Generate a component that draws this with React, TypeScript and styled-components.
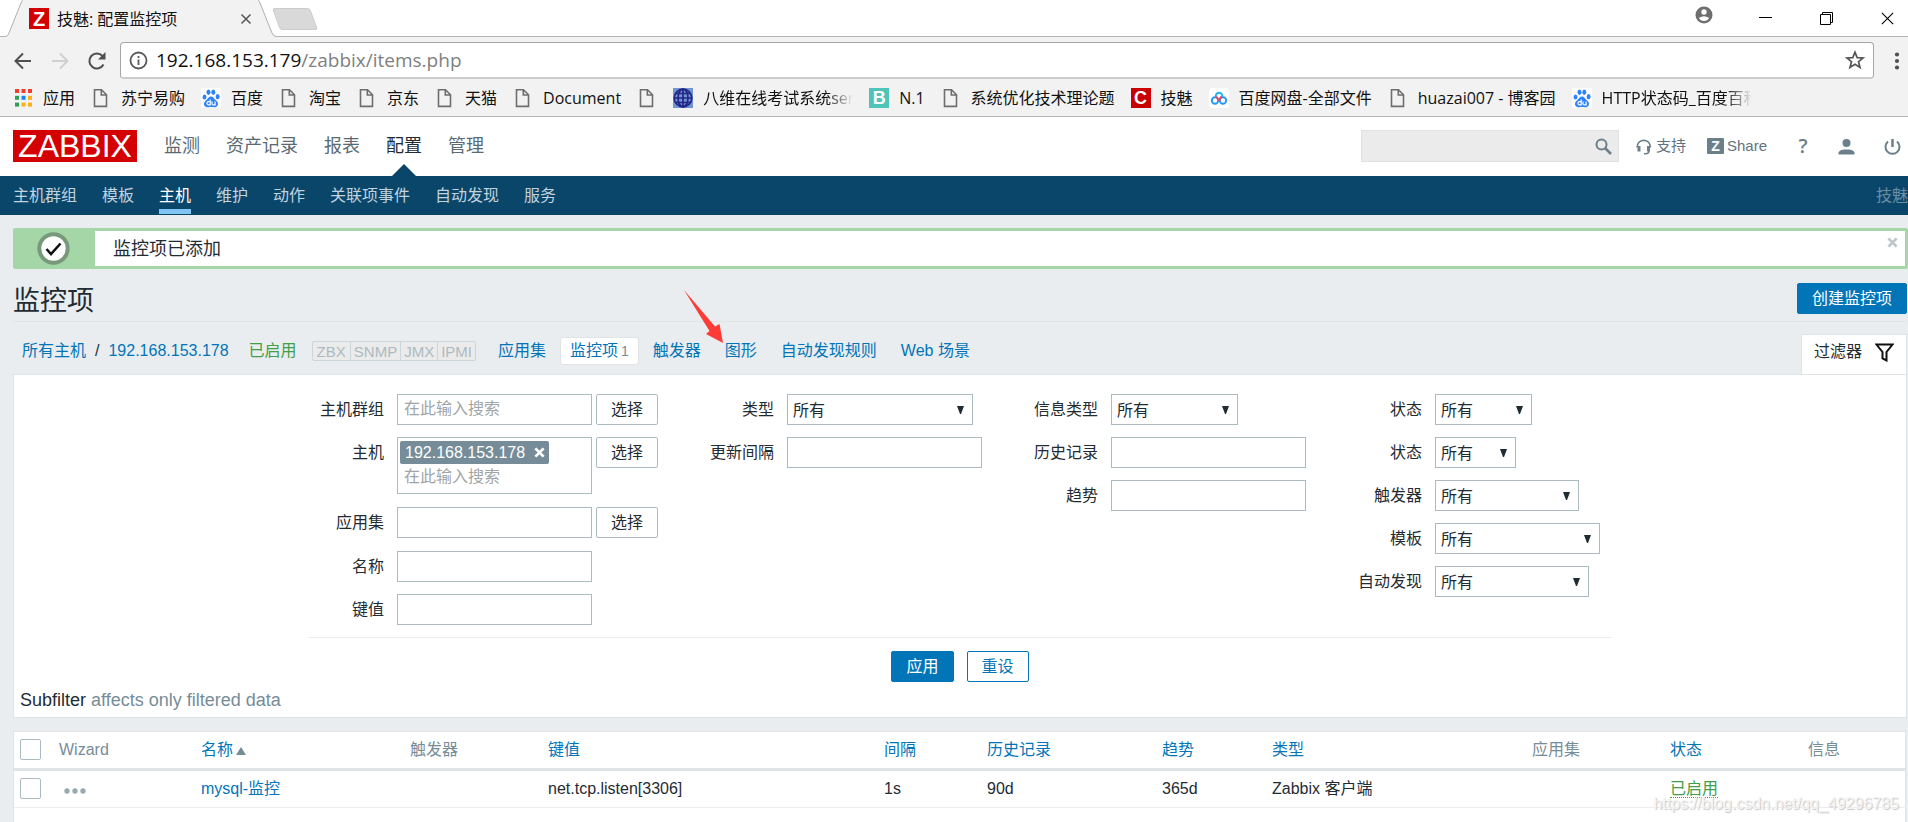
import React from "react";
import styled, { createGlobalStyle, css } from "styled-components";

const uiFont = `"Open Sans", "Noto Sans CJK SC", sans-serif`;
const pageFont = `"Liberation Sans", "Noto Sans CJK SC", sans-serif`;
const blue = "#0275b8";
const slate = "#768d99";
const line = "#dfe4e7";
const fieldLine = "#acbbc2";
const green = "#429e47";

const GlobalStyle = createGlobalStyle`
  *, *::before, *::after { box-sizing: border-box; }
  body { margin: 0; background: #e9edf0; color: #1f2c33; font: 16px/20px ${pageFont}; }
  button, input, select { font: inherit; color: inherit; margin: 0; }
  a { color: inherit; text-decoration: none; }
  svg { display: block; flex: none; }
`;

const Window = styled.div`
  display: flex;
  flex-direction: column;
  min-height: 100vh;
  overflow: hidden;
  position: relative;
`;

/* ---------- browser chrome ---------- */

const TabStrip = styled.div`
  display: flex;
  height: 37px;
  padding-left: 6px;
  background: #fff;
  border-bottom: 1px solid #b5b5b5;
  font-family: ${uiFont};
`;

const Tab = styled.div`
  position: relative;
  display: flex;
  align-items: center;
  width: 270px;
  height: 37px;
  margin-bottom: -1px;
  padding: 0 20px 0 23px;
  color: #111;
`;

const TabShape = styled.svg`
  position: absolute;
  left: 0;
  top: 0;
`;

const TabIcon = styled.span`
  position: relative;
  display: grid;
  place-items: center;
  width: 20px;
  height: 21px;
  margin-right: 8px;
  background: #d40000;
  color: #fff;
  font: bold 20px/20px ${pageFont};
`;

const TabTitle = styled.span`
  position: relative;
  flex: 1;
`;

const IconButton = styled.button<{ $w?: number }>`
  position: relative;
  display: grid;
  place-items: center;
  flex: none;
  width: ${(p) => p.$w ?? 20}px;
  height: 24px;
  padding: 0;
  border: 0;
  background: none;
  cursor: pointer;
`;

const NewTab = styled.button`
  width: 38px;
  height: 22px;
  margin: 8px 0 0 0;
  padding: 0;
  border: 1px solid #ccc;
  border-radius: 3px;
  background: #d9d9d9;
  transform: skewX(20deg);
`;

const WindowButtons = styled.div`
  display: flex;
  align-items: center;
  gap: 41px;
  margin-left: auto;
  padding-right: 11px;
`;

const Toolbar = styled.div`
  display: flex;
  align-items: center;
  height: 43px;
  padding: 4px 2px 0 13px;
  background: #f2f2f2;
`;

const NavButtons = styled.div`
  display: flex;
  gap: 17px;
  margin-right: 13px;
`;

const Omnibox = styled.div`
  display: flex;
  align-items: center;
  flex: 1;
  height: 37px;
  margin-right: 14px;
  padding: 0 8px;
  border: 1px solid #a6a6a6;
  border-bottom: 2px solid #ccc;
  border-radius: 4px;
  background: #fff;
`;

const Address = styled.div`
  flex: 1;
  margin-left: 8px;
  color: #808080;
  font: 19px/28px ${uiFont};
  b { color: #111; font-weight: 400; }
`;

const Bookmarks = styled.nav`
  display: flex;
  align-items: center;
  gap: 16px;
  height: 37px;
  padding-left: 13px;
  background: #f2f2f2;
  border-bottom: 1px solid #b6b6b6;
  font: 16px/22px ${uiFont};
  color: #111;
`;

const Bookmark = styled.a`
  display: flex;
  align-items: center;
  gap: 10px;
  flex: none;
`;

const BookmarkText = styled.span<{ $fade?: boolean }>`
  white-space: nowrap;
  ${(p) =>
    p.$fade &&
    css`
      width: 150px;
      overflow: hidden;
      mask-image: linear-gradient(to right, #000 124px, transparent 150px);
    `}
`;

const IconBox = styled.span<{ $bg?: string; $fg?: string }>`
  display: grid;
  place-items: center;
  width: 20px;
  height: 20px;
  background: ${(p) => p.$bg ?? "none"};
  color: ${(p) => p.$fg ?? "#fff"};
  font: bold 18px/20px ${pageFont};
`;

/* ---------- zabbix header ---------- */

const Header = styled.header`
  display: flex;
  align-items: center;
  height: 59px;
  padding: 0 7px 1px 13px;
  background: #fff;
`;

const Logo = styled.a`
  width: 124px;
  height: 32px;
  background: #d40000;
  color: #fff;
  font: 32px/32px "Liberation Sans", sans-serif;
  text-align: center;
`;

const MainNav = styled.nav`
  display: flex;
  gap: 26px;
  height: 58px;
  margin-left: 27px;
  font-size: 18px;
  line-height: 58px;
`;

const MainLink = styled.a<{ $active?: boolean }>`
  position: relative;
  color: ${(p) => (p.$active ? "#1f2c33" : "#5a6a73")};
  ${(p) =>
    p.$active &&
    css`
      &::after {
        content: "";
        position: absolute;
        left: 6px;
        bottom: -1px;
        border: 12px solid transparent;
        border-top: 0;
        border-bottom-color: #0a466a;
      }
    `}
`;

const SearchBox = styled.label`
  display: flex;
  align-items: center;
  width: 258px;
  height: 32px;
  margin-left: auto;
  padding-right: 6px;
  border: 1px solid #dfe1e2;
  background: #ebebeb;
  input {
    flex: 1;
    min-width: 0;
    height: 28px;
    border: 0;
    padding: 0 8px;
    background: none;
    outline: 0;
  }
`;

const HeaderTools = styled.div`
  display: flex;
  align-items: center;
  margin-left: 17px;
  color: #5f747f;
  font-size: 15px;
`;

const ToolLink = styled.a<{ $gap: number }>`
  display: flex;
  align-items: center;
  gap: 3px;
  margin-right: ${(p) => p.$gap}px;
`;

const ShareBadge = styled.span`
  width: 17px;
  height: 16px;
  border-radius: 1px;
  background: #6c808b;
  color: #fff;
  font: bold 14px/16px ${pageFont};
  text-align: center;
`;

const HelpMark = styled.span`
  width: 12px;
  color: #6c808b;
  font: 600 20px/20px ${uiFont};
  text-align: center;
`;

const SubNav = styled.nav`
  display: flex;
  gap: 25px;
  height: 39px;
  padding-left: 13px;
  background: #0a466a;
  color: #c0d3df;
  line-height: 40px;
`;

const SubLink = styled.a<{ $active?: boolean }>`
  height: 38px;
  border-bottom: 5px solid ${(p) => (p.$active ? "#7fc4f3" : "transparent")};
  color: ${(p) => (p.$active ? "#fff" : "inherit")};
  white-space: nowrap;
`;

const ServerName = styled.span`
  margin-left: auto;
  color: #6b8ea3;
`;

/* ---------- page body ---------- */

const Page = styled.main`
  display: flex;
  flex-direction: column;
  flex: 1;
  padding: 13px 0 0 13px;
`;

const Message = styled.div`
  display: flex;
  align-items: center;
  height: 41px;
  border: 3px solid #a5d6a7;
  border-radius: 2px;
  background: #fff;
  font-size: 18px;
`;

const MessageIcon = styled.div`
  display: flex;
  align-items: center;
  width: 79px;
  height: 35px;
  margin-right: 18px;
  padding-left: 21px;
  background: #a5d6a7;
`;

const MessageClose = styled(IconButton)`
  align-self: flex-start;
  margin: -1px 3px 0 auto;
`;

const TitleRow = styled.div`
  display: flex;
  align-items: flex-start;
  justify-content: space-between;
  height: 53px;
  margin-right: 1px;
  padding-top: 14px;
  border-bottom: 1px solid ${line};
`;

const Title = styled.h1`
  margin: 0;
  font-size: 27px;
  line-height: 36px;
  font-weight: 400;
`;

const Button = styled.button<{ $kind?: "primary" | "outline" | "plain" }>`
  flex: none;
  height: 31px;
  padding: 0 14px;
  border: 1px solid ${(p) => (p.$kind === "plain" ? fieldLine : blue)};
  border-radius: 2px;
  background: ${(p) => (p.$kind === "primary" ? blue : "#fff")};
  color: ${(p) => (p.$kind === "primary" ? "#fff" : p.$kind === "outline" ? blue : "#1f2c33")};
  line-height: 28px;
  cursor: pointer;
`;

const Crumbs = styled.div`
  display: flex;
  align-items: center;
  height: 52px;
  margin-right: 1px;
  padding: 6px 0 0 9px;
  color: ${blue};
  white-space: nowrap;
`;

const HostPath = styled.div`
  display: flex;
  gap: 9px;
  i { color: #1f2c33; font-style: normal; }
`;

const Enabled = styled.a<{ $dotted?: boolean }>`
  color: ${green};
  ${(p) => p.$dotted && `border-bottom: 1px dotted ${green};`}
`;

const HostStatus = styled(Enabled)`
  margin: 0 15px 0 20px;
`;

const Interfaces = styled.div`
  display: flex;
  height: 20px;
  margin-right: 10px;
  border: 1px solid #ccd5d9;
  border-radius: 2px;
  background: #ebebeb;
  color: #adbac1;
  font-size: 15px;
  line-height: 20px;
  span { padding: 0 4px; }
  span + span { border-left: 1px solid #ccd5d9; padding: 0 3px; }
`;

const CrumbTab = styled.a<{ $active?: boolean }>`
  height: 28px;
  padding: 0 ${(p) => (p.$active ? 9 : 12)}px;
  border: ${(p) => (p.$active ? `1px solid ${line}` : 0)};
  border-radius: 3px;
  background: ${(p) => (p.$active ? "#fff" : "none")};
  line-height: ${(p) => (p.$active ? 26 : 28)}px;
  margin: 0 ${(p) => (p.$active ? 2 : 0)}px;
  small { margin-left: 3px; color: ${slate}; font-size: 14px; }
`;

const FilterTab = styled.button`
  display: flex;
  align-items: center;
  gap: 13px;
  align-self: flex-end;
  height: 41px;
  margin: 0 0 -1px auto;
  padding: 0 12px 6px;
  border: 1px solid ${line};
  border-bottom: 0;
  border-radius: 2px 2px 0 0;
  background: #fff;
  color: #1f2c33;
`;

const FilterPanel = styled.form`
  display: flex;
  flex-direction: column;
  margin-right: 1px;
  padding: 19px 0 6px;
  border: 1px solid ${line};
  background: #fff;
`;

const FilterGrid = styled.div`
  display: flex;
  gap: 52px;
  align-self: center;
  padding: 0 12px 12px;
  border-bottom: 1px solid #ebeef0;
`;

const FilterColumn = styled.div`
  display: flex;
  flex-direction: column;
  gap: 12px;
`;

const Field = styled.div<{ $tall?: boolean }>`
  display: flex;
  align-items: ${(p) => (p.$tall ? "center" : "flex-start")};
  gap: 4px;
  min-height: ${(p) => (p.$tall ? 33 : 31)}px;
`;

const Label = styled.label`
  width: 64px;
  margin-right: 9px;
  text-align: right;
  line-height: 31px;
  white-space: nowrap;
`;

const TextInput = styled.input`
  width: 195px;
  height: 31px;
  padding: 0 6px 1px;
  border: 1px solid ${fieldLine};
  background: #fff;
  &::placeholder { color: #a0a5a8; opacity: 1; }
`;

const TagInput = styled.div`
  display: flex;
  flex-direction: column;
  align-items: flex-start;
  width: 195px;
  height: 57px;
  padding: 3px 2px;
  border: 1px solid ${fieldLine};
  input {
    width: 100%;
    height: 27px;
    padding: 0 4px;
    border: 0;
    background: none;
    &::placeholder { color: #a0a5a8; opacity: 1; }
  }
`;

const Tag = styled.span`
  display: flex;
  align-items: center;
  gap: 4px;
  height: 23px;
  padding: 0 0 0 5px;
  border-radius: 2px;
  background: ${slate};
  color: #fff;
`;

const SelectBox = styled.span<{ $w: number }>`
  position: relative;
  width: ${(p) => p.$w}px;
  select {
    display: block;
    width: 100%;
    height: 31px;
    padding: 3px 5px 0;
    border: 1px solid ${fieldLine};
    border-radius: 0;
    background: #fff;
    appearance: none;
  }
  svg { position: absolute; right: 9px; top: 12px; pointer-events: none; }
`;

const FilterButtons = styled.div`
  display: flex;
  justify-content: center;
  gap: 13px;
  margin: 13px 0 7px;
`;

const Subfilter = styled.div`
  padding-left: 6px;
  font-size: 18px;
  line-height: 22px;
  span { color: ${slate}; }
`;

const TableCard = styled.section`
  flex: 1;
  margin: 13px 2px 0 0;
  border: 1px solid ${line};
  border-bottom: 0;
  background: #fff;
`;

const Table = styled.table`
  width: 100%;
  table-layout: fixed;
  border-collapse: collapse;
  th, td { padding: 0 6px; text-align: left; font-weight: 400; white-space: nowrap; }
  th { height: 37px; border-bottom: 3px solid ${line}; color: ${slate}; }
  td { height: 38px; border-bottom: 1px solid #ebeef0; }
  th a, td a.item { color: ${blue}; }
  input {
    display: block;
    width: 21px;
    height: 21px;
    appearance: none;
    border: 1px solid ${fieldLine};
    border-radius: 2px;
    background: #fff;
  }
`;

const SortArrow = styled.svg`
  display: inline-block;
  margin-left: 3px;
`;

const PointerArrow = styled.svg`
  position: absolute;
  left: 684px;
  top: 289px;
`;

const Watermark = styled.div`
  position: absolute;
  right: 9px;
  bottom: 8px;
  color: #f4f4f4;
  text-shadow: 1px 1px 1px #c4c4c4;
`;

/* ---------- icons ---------- */

const FileIcon = () => (
  <svg width="20" height="20" viewBox="0 0 20 20" fill="none" stroke="#6e6e6e" strokeWidth="1.6">
    <path d="M3.500 1.800h7l5 5v11.600h-12zM10.300 2v5h5.200" />
  </svg>
);

const PawIcon = () => (
  <svg width="20" height="20" viewBox="0 0 20 20">
    <path fill="#fff" d="M0 0h20v20H0z" />
    <g fill="#2e83fb">
      <ellipse cx="3.500" cy="9" rx="2" ry="2.600" />
      <ellipse cx="7.500" cy="4.200" rx="2" ry="2.700" />
      <ellipse cx="12.300" cy="4.200" rx="2" ry="2.700" />
      <ellipse cx="16.600" cy="8.700" rx="2" ry="2.600" />
      <path d="M10 8.500c2.200 0 3 2 4.800 3.700 2.200 2 2.500 3.200 2 4.800-.6 2-2.600 2.400-4.300 2.200-1.700-.2-3.300-.2-5 0-1.700.2-3.700-.2-4.300-2.200-.5-1.600-.2-2.800 2-4.800C7 10.500 7.800 8.500 10 8.500z" />
    </g>
    <g fill="none" stroke="#fff" strokeWidth="1.200">
      <path d="M9.200 11.500v5.300H7.500a1.500 1.500 0 010-3.200h1.700M11 13.500v2.200q0 1.100 1.100 1.100h2v-3.300" />
    </g>
  </svg>
);

const AppsIcon = () => (
  <svg width="20" height="20" viewBox="0 0 20 20">
    {["#f33d2f", "#f33d2f", "#f33d2f", "#2f9e59", "#1a82f7", "#fcaf17", "#2f9e59", "#fcaf17", "#fcaf17"].map((c, i) => (
      <rect key={i} x={2 + (i % 3) * 6.500} y={1 + Math.floor(i / 3) * 6.800} width="4" height="4" fill={c} />
    ))}
  </svg>
);

const GlobeIcon = () => (
  <svg width="20" height="20" viewBox="0 0 20 20" fill="none" stroke="#242489" strokeWidth="1.700">
    <path fill="#6f97cf" stroke="none" d="M0 0h20v20H0z" />
    <circle cx="10" cy="10" r="8.800" />
    <ellipse cx="10" cy="10" rx="5" ry="8.800" />
    <path d="M10 1v18M1 10h18M3 5.500h14M3 14.500h14" />
  </svg>
);

const PanIcon = () => (
  <svg width="20" height="20" viewBox="0 0 20 20" fill="none" strokeWidth="1.900">
    <rect width="20" height="20" rx="3" fill="#fff" />
    <circle cx="6" cy="12.500" r="3.200" stroke="#1f9bf5" />
    <circle cx="14" cy="12.500" r="3.200" stroke="#1f9bf5" />
    <path d="M7 9a3.200 3.200 0 116 0" stroke="#12b2f5" />
    <path d="M7.200 8.500q1 1.500 4 5M12.800 8.500L10 11.500" stroke="#ee4660" />
  </svg>
);

const HeadsetIcon = () => (
  <svg width="17" height="17" viewBox="0 0 17 17" fill="none" stroke="#6c808b" strokeWidth="1.700">
    <path d="M1.300 9.500V8a6.500 6.500 0 0112.900 0v1.500" />
    <path d="M3 8v5.500M12.500 8v5.500" strokeWidth="3" />
    <path d="M13 13q0 2.700-3.500 2.700H8" strokeWidth="1.500" />
  </svg>
);

const Cross = ({ size, color, width = 2 }: { size: number; color: string; width?: number }) => (
  <svg width={size} height={size} viewBox="0 0 12 12" stroke={color} strokeWidth={width}>
    <path d="M1.500 1.500l9 9M10.500 1.500l-9 9" />
  </svg>
);

/* ---------- data ---------- */

const letterIcon = (text: string, bg: string) => <IconBox $bg={bg}>{text}</IconBox>;

const bookmarks: { text?: string; icon: React.ReactNode; fade?: boolean }[] = [
  { text: "应用", icon: <AppsIcon /> },
  { text: "苏宁易购", icon: <FileIcon /> },
  { text: "百度", icon: <PawIcon /> },
  { text: "淘宝", icon: <FileIcon /> },
  { text: "京东", icon: <FileIcon /> },
  { text: "天猫", icon: <FileIcon /> },
  { text: "Document", icon: <FileIcon /> },
  { icon: <FileIcon /> },
  { text: "八维在线考试系统ser", icon: <GlobeIcon />, fade: true },
  { text: "N.1", icon: letterIcon("B", "#4fc4b8") },
  { text: "系统优化技术理论题", icon: <FileIcon /> },
  { text: "技魅", icon: letterIcon("C", "#c80000") },
  { text: "百度网盘-全部文件", icon: <PanIcon /> },
  { text: "huazai007 - 博客园", icon: <FileIcon /> },
  { text: "HTTP状态码_百度百科", icon: <PawIcon />, fade: true },
];

const mainLinks = ["监测", "资产记录", "报表", "配置", "管理"];
const subLinks = ["主机群组", "模板", "主机", "维护", "动作", "关联项事件", "自动发现", "服务"];
const columnWidths = [39, 142, 209, 138, 336, 103, 175, 110, 260, 138, 138, 104];

const Select = ({ id, label, width }: { id: string; label: string; width: number }) => (
  <Field>
    <Label htmlFor={id}>{label}</Label>
    <SelectBox $w={width}>
      <select id={id}>
        <option>所有</option>
      </select>
      <svg width="7" height="8" viewBox="0 0 7 8">
        <path d="M0 0h7L4 8H3z" fill="#1f2c33" />
      </svg>
    </SelectBox>
  </Field>
);

type TextProps = { id: string; label: string; placeholder?: string; pick?: boolean; tall?: boolean };

const Text = ({ id, label, placeholder, pick, tall }: TextProps) => (
  <Field $tall={tall}>
    <Label htmlFor={id}>{label}</Label>
    <TextInput id={id} placeholder={placeholder} />
    {pick && <Button type="button" $kind="plain">选择</Button>}
  </Field>
);

export default function App() {
  return (
    <Window>
      <GlobalStyle />

      <TabStrip>
        <Tab>
          <TabShape width="270" height="37" viewBox="0 0 270 37">
            <path d="M0 37V36.500Q2 36 3 33L15 3Q16 0 18 0H251Q253 0 254 3L266 33Q267 36 270 36.500V37z" fill="#f2f2f2" />
            <path d="M0 36.500Q2 36 3 33L15 3Q16 0 18 -1M251 -1Q253 0 254 3L266 33Q267 36 270 36.500" fill="none" stroke="#b0b0b0" />
          </TabShape>
          <TabIcon>Z</TabIcon>
          <TabTitle>技魅: 配置监控项</TabTitle>
          <IconButton aria-label="关闭标签页">
            <Cross size={12} color="#555" width={1.5} />
          </IconButton>
        </Tab>
        <NewTab aria-label="新标签页" />
        <WindowButtons>
          <IconButton aria-label="用户">
            <svg width="18" height="26" viewBox="0 0 18 26">
              <circle cx="9" cy="9" r="8.500" fill="#6e6e6e" />
              <circle cx="9" cy="6" r="2.700" fill="#fff" />
              <path d="M3.800 12q5.200-3.500 10.400 0-1.800 3-5.200 3t-5.200-3z" fill="#fff" />
            </svg>
          </IconButton>
          <IconButton aria-label="最小化">
            <svg width="13" height="13" stroke="#000"><path d="M0 5.500h13" /></svg>
          </IconButton>
          <IconButton aria-label="还原">
            <svg width="13" height="13" fill="none" stroke="#000"><path d="M.5 2.500h10v10H.5zM2.500 2.500v-2h10v10h-2" /></svg>
          </IconButton>
          <IconButton aria-label="关闭">
            <Cross size={15} color="#000" width={0.9} />
          </IconButton>
        </WindowButtons>
      </TabStrip>

      <Toolbar>
        <NavButtons>
          <IconButton aria-label="后退">
            <svg width="18" height="18" viewBox="0 0 18 18" fill="none" stroke="#505050" strokeWidth="2"><path d="M17 9H2M9 1.500L1.500 9 9 16.500" /></svg>
          </IconButton>
          <IconButton aria-label="前进">
            <svg width="18" height="18" viewBox="0 0 18 18" fill="none" stroke="#d0d0d0" strokeWidth="2"><path d="M1 9h15M9 1.500L16.500 9 9 16.500" /></svg>
          </IconButton>
          <IconButton aria-label="重新加载">
            <svg width="20" height="20" viewBox="0 0 20 20" fill="none" stroke="#505050" strokeWidth="2"><path d="M16.500 13.500A7.500 7.500 0 1115.500 5" /><path d="M18.500 1v7.500H11z" fill="#505050" stroke="none" /></svg>
          </IconButton>
        </NavButtons>
        <Omnibox>
          <svg width="19" height="19" viewBox="0 0 19 19" fill="none" stroke="#5a5a5a" strokeWidth="1.800"><circle cx="9.500" cy="9.500" r="8" /><path d="M9.500 8.500V14M9.500 5v2" /></svg>
          <Address><b>192.168.153.179</b>/zabbix/items.php</Address>
          <IconButton aria-label="收藏">
            <svg width="20" height="20" viewBox="0 0 20 20" fill="none" stroke="#555" strokeWidth="1.700"><path d="M10 2.200l2.200 5.400 5.800.4-4.500 3.700 1.500 5.700-5-3.200-5 3.200 1.500-5.700L2 8l5.800-.4z" /></svg>
          </IconButton>
        </Omnibox>
        <IconButton aria-label="菜单" $w={18}>
          <svg width="6" height="18" fill="#505050"><circle cx="3" cy="2.500" r="2.100" /><circle cx="3" cy="9" r="2.100" /><circle cx="3" cy="15.500" r="2.100" /></svg>
        </IconButton>
      </Toolbar>

      <Bookmarks>
        {bookmarks.map((b, i) => (
          <Bookmark href="#" key={i} aria-label={b.text ?? "书签"}>
            {b.icon}
            {b.text && <BookmarkText $fade={b.fade}>{b.text}</BookmarkText>}
          </Bookmark>
        ))}
      </Bookmarks>

      <Header>
        <Logo href="#">ZABBIX</Logo>
        <MainNav>
          {mainLinks.map((t) => (
            <MainLink href="#" key={t} $active={t === "配置"}>{t}</MainLink>
          ))}
        </MainNav>
        <SearchBox>
          <input type="text" aria-label="搜索" />
          <svg width="17" height="17" viewBox="0 0 17 17" fill="none" stroke="#6c808b" strokeWidth="2"><circle cx="6.500" cy="6.500" r="5" /><path d="M10 10l6 6" strokeWidth="2.600" /></svg>
        </SearchBox>
        <HeaderTools>
          <ToolLink href="#" $gap={21}>
            <HeadsetIcon />
            支持
          </ToolLink>
          <ToolLink href="#" $gap={30}><ShareBadge>Z</ShareBadge>Share</ToolLink>
          <ToolLink href="#" $gap={29}><HelpMark>?</HelpMark></ToolLink>
          <ToolLink href="#" $gap={29} aria-label="用户资料">
            <svg width="17" height="17" viewBox="0 0 17 17" fill="#6c808b"><circle cx="8.500" cy="5" r="4" /><path d="M.5 16.500v-2q1.500-3 6-3h4q4.500 0 6 3v2z" /></svg>
          </ToolLink>
          <ToolLink href="#" $gap={0} aria-label="退出">
            <svg width="17" height="17" viewBox="0 0 17 17" fill="none" stroke="#6c808b" strokeWidth="2"><path d="M4 3.500a7 7 0 109 0" /><path d="M8.500 1v8" strokeWidth="2.500" /></svg>
          </ToolLink>
        </HeaderTools>
      </Header>

      <SubNav>
        {subLinks.map((t) => (
          <SubLink href="#" key={t} $active={t === "主机"}>{t}</SubLink>
        ))}
        <ServerName>技魅</ServerName>
      </SubNav>

      <Page>
        <Message role="status">
          <MessageIcon>
            <svg width="33" height="33" viewBox="0 0 33 33"><circle cx="16.500" cy="16.500" r="14.200" fill="#fff" stroke="#78997a" strokeWidth="4" /><path d="M9.500 17l4.500 5 9.500-10.500" fill="none" stroke="#111" strokeWidth="2.600" /></svg>
          </MessageIcon>
          监控项已添加
          <MessageClose aria-label="关闭"><Cross size={11} color="#bcc6cb" width={3} /></MessageClose>
        </Message>

        <TitleRow>
          <Title>监控项</Title>
          <Button $kind="primary">创建监控项</Button>
        </TitleRow>

        <Crumbs>
          <HostPath>
            <a href="#">所有主机</a>
            <i>/</i>
            <a href="#">192.168.153.178</a>
          </HostPath>
          <HostStatus href="#">已启用</HostStatus>
          <Interfaces>
            <span>ZBX</span>
            <span>SNMP</span>
            <span>JMX</span>
            <span>IPMI</span>
          </Interfaces>
          <CrumbTab href="#">应用集</CrumbTab>
          <CrumbTab href="#" $active>监控项<small>1</small></CrumbTab>
          <CrumbTab href="#">触发器</CrumbTab>
          <CrumbTab href="#">图形</CrumbTab>
          <CrumbTab href="#">自动发现规则</CrumbTab>
          <CrumbTab href="#">Web 场景</CrumbTab>
          <FilterTab>
            过滤器
            <svg width="19" height="19" viewBox="0 0 19 19" fill="none" stroke="#111" strokeWidth="2"><path d="M1.500 1.500h16L11.500 9v8.500L7.500 15.500V9z" /></svg>
          </FilterTab>
        </Crumbs>

        <FilterPanel onSubmit={(e) => e.preventDefault()}>
          <FilterGrid>
            <FilterColumn>
              <Text id="group" label="主机群组" placeholder="在此输入搜索" pick />
              <Field>
                <Label htmlFor="host">主机</Label>
                <TagInput>
                  <Tag>
                    192.168.153.178
                    <IconButton type="button" aria-label="移除"><Cross size={11} color="#fff" width={3} /></IconButton>
                  </Tag>
                  <input id="host" placeholder="在此输入搜索" />
                </TagInput>
                <Button type="button" $kind="plain">选择</Button>
              </Field>
              <Text id="application" label="应用集" pick tall />
              <Text id="name" label="名称" />
              <Text id="key" label="键值" />
            </FilterColumn>
            <FilterColumn>
              <Select id="type" label="类型" width={186} />
              <Text id="delay" label="更新间隔" />
            </FilterColumn>
            <FilterColumn>
              <Select id="value-type" label="信息类型" width={127} />
              <Text id="history" label="历史记录" />
              <Text id="trends" label="趋势" />
            </FilterColumn>
            <FilterColumn>
              <Select id="state" label="状态" width={97} />
              <Select id="status" label="状态" width={81} />
              <Select id="triggers" label="触发器" width={144} />
              <Select id="templates" label="模板" width={165} />
              <Select id="discovery" label="自动发现" width={154} />
            </FilterColumn>
          </FilterGrid>
          <FilterButtons>
            <Button type="submit" $kind="primary">应用</Button>
            <Button type="reset" $kind="outline">重设</Button>
          </FilterButtons>
          <Subfilter>Subfilter <span>affects only filtered data</span></Subfilter>
        </FilterPanel>

        <TableCard>
          <Table>
            <colgroup>
              {columnWidths.map((w, i) => <col key={i} width={w} />)}
            </colgroup>
            <thead>
              <tr>
                <th><input type="checkbox" aria-label="全选" /></th>
                <th>Wizard</th>
                <th>
                  <a href="#">名称</a>
                  <SortArrow width="10" height="8" viewBox="0 0 10 8"><path d="M5 0l5 8H0z" fill={slate} /></SortArrow>
                </th>
                <th>触发器</th>
                <th><a href="#">键值</a></th>
                <th><a href="#">间隔</a></th>
                <th><a href="#">历史记录</a></th>
                <th><a href="#">趋势</a></th>
                <th><a href="#">类型</a></th>
                <th>应用集</th>
                <th><a href="#">状态</a></th>
                <th>信息</th>
              </tr>
            </thead>
            <tbody>
              <tr>
                <td><input type="checkbox" aria-label="mysql-监控" /></td>
                <td>
                  <IconButton aria-label="更多" $w={32}>
                    <svg width="22" height="12" fill="#98a9b2"><circle cx="3" cy="8" r="2.700" /><circle cx="11" cy="8" r="2.700" /><circle cx="19" cy="8" r="2.700" /></svg>
                  </IconButton>
                </td>
                <td><a className="item" href="#">mysql-监控</a></td>
                <td />
                <td>net.tcp.listen[3306]</td>
                <td>1s</td>
                <td>90d</td>
                <td>365d</td>
                <td>Zabbix 客户端</td>
                <td />
                <td><Enabled href="#" $dotted>已启用</Enabled></td>
                <td />
              </tr>
            </tbody>
          </Table>
        </TableCard>
      </Page>

      <PointerArrow width="41" height="55" viewBox="0 0 41 55">
        <path d="M0 1L31 37.500 35.500 35 39 54 22 45 25.500 42z" fill="#ff3b37" />
      </PointerArrow>
      <Watermark>https://blog.csdn.net/qq_49296785</Watermark>
    </Window>
  );
}
